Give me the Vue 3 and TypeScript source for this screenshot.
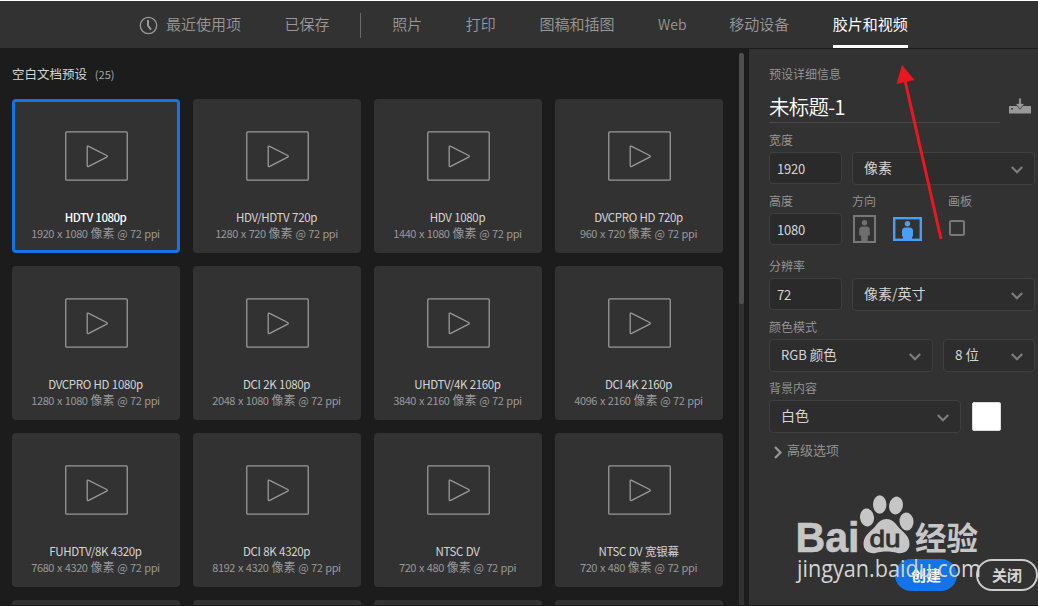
<script setup lang="ts">
import { ref } from 'vue'

interface Preset {
  name: string
  size: string
}

const categories: string[] = ['照片', '打印', '图稿和插图', 'Web', '移动设备', '胶片和视频']
const activeCategory = ref('胶片和视频')

const presets: Preset[] = [
  { name: 'HDTV 1080p', size: '1920 x 1080' },
  { name: 'HDV/HDTV 720p', size: '1280 x 720' },
  { name: 'HDV 1080p', size: '1440 x 1080' },
  { name: 'DVCPRO HD 720p', size: '960 x 720' },
  { name: 'DVCPRO HD 1080p', size: '1280 x 1080' },
  { name: 'DCI 2K 1080p', size: '2048 x 1080' },
  { name: 'UHDTV/4K 2160p', size: '3840 x 2160' },
  { name: 'DCI 4K 2160p', size: '4096 x 2160' },
  { name: 'FUHDTV/8K 4320p', size: '7680 x 4320' },
  { name: 'DCI 8K 4320p', size: '8192 x 4320' },
  { name: 'NTSC DV', size: '720 x 480' },
  { name: 'NTSC DV 宽银幕', size: '720 x 480' },
]
const selected = ref(0)
</script>

<template>
  <div class="dialog">
    <header class="tabs">
      <svg class="clock" width="19" height="19" viewBox="0 0 19 19">
        <circle cx="9.5" cy="9.5" r="8.2" />
        <path d="M9 4v5.7l3 4" />
      </svg>
      <span class="tab recent">最近使用项</span>
      <span class="tab">已保存</span>
      <i class="divider"></i>
      <span
        v-for="c in categories"
        :key="c"
        class="tab"
        :class="{ active: c === activeCategory, latin: c === 'Web' }"
        @click="activeCategory = c"
      >{{ c }}</span>
    </header>

    <div class="body">
      <section class="list">
        <div class="heading">空白文档预设 <small>(25)</small></div>
        <div class="grid">
          <div
            v-for="(p, i) in presets"
            :key="p.name"
            class="card"
            :class="{ selected: i === selected }"
            @click="selected = i"
          >
            <svg class="film" width="63" height="50" viewBox="0 0 63 50">
              <rect x="0.75" y="0.9" width="61.5" height="48.3" rx="1" />
              <path d="M22.2 16.200V34.400q0 1.600 1.500.9l18-9.200q1.300-.8 0-1.600l-18-9.200q-1.500-.7-1.500.9z" />
            </svg>
            <div class="name">{{ p.name }}</div>
            <div class="meta">{{ p.size }} <span>像素</span> @ 72 ppi</div>
          </div>
          <div v-for="n in 4" :key="'next' + n" class="card"></div>
        </div>
      </section>
      <div class="scroll"><i></i></div>

      <aside class="panel">
        <div class="caption">预设详细信息</div>
        <div class="title-row">
          <div class="title">未标题-1</div>
          <svg class="save" width="22" height="17" viewBox="0 0 22 17">
            <path d="M0 8h22v7.500H0z" fill="#999" />
            <path d="M9.700 0h2.600v5.500h3.500L11 11.200 6.200 5.500h3.500z" fill="#999" stroke="#323232" stroke-width=".8" />
            <rect x="2.200" y="10" width="1.600" height="1.600" fill="#323232" />
          </svg>
        </div>

        <div class="row first">
          <div class="field narrow">
            <label>宽度</label>
            <div class="input">1920</div>
          </div>
          <div class="field wide">
            <label></label>
            <div class="select">像素<svg class="chev" viewBox="0 0 12 8"><path d="M.8 1l5.200 5.200L11.200 1" /></svg></div>
          </div>
        </div>

        <div class="row">
          <div class="field narrow">
            <label>高度</label>
            <div class="input">1080</div>
          </div>
          <div class="field orient">
            <label>方向</label>
            <div class="orients">
              <svg width="23" height="28" viewBox="0 0 23 28" class="portrait">
                <rect x="1" y="1" width="21" height="26" />
                <circle cx="11.500" cy="7.800" r="2.700" />
                <path d="M6.200 15q0-3.500 3.500-3.500h3.600q3.500 0 3.500 3.500v5.500h-2V26H8.200v-5.500h-2z" />
              </svg>
              <svg width="29" height="24" viewBox="0 0 29 24" class="landscape">
                <rect x="1.200" y="1.200" width="26.600" height="21.600" />
                <circle cx="14.500" cy="6.800" r="2.700" />
                <path d="M9 14q0-3.500 3.500-3.500h4Q20 10.500 20 14v5.500h-1V22h-9v-2.500H9z" />
              </svg>
            </div>
          </div>
          <div class="field">
            <label>画板</label>
            <div class="check"></div>
          </div>
        </div>

        <div class="row spaced">
          <div class="field narrow">
            <label>分辨率</label>
            <div class="input">72</div>
          </div>
          <div class="field wide">
            <label></label>
            <div class="select">像素/英寸<svg class="chev" viewBox="0 0 12 8"><path d="M.8 1l5.200 5.200L11.200 1" /></svg></div>
          </div>
        </div>

        <div class="row">
          <div class="field mode">
            <label>颜色模式</label>
            <div class="select"><span class="latin">RGB</span>&nbsp;颜色<svg class="chev" viewBox="0 0 12 8"><path d="M.8 1l5.200 5.200L11.200 1" /></svg></div>
          </div>
          <div class="field depth">
            <label></label>
            <div class="select">8 位<svg class="chev" viewBox="0 0 12 8"><path d="M.8 1l5.200 5.200L11.200 1" /></svg></div>
          </div>
        </div>

        <div class="row">
          <div class="field background">
            <label>背景内容</label>
            <div class="select">白色<svg class="chev" viewBox="0 0 12 8"><path d="M.8 1l5.200 5.200L11.200 1" /></svg></div>
          </div>
          <div class="swatch"></div>
        </div>

        <div class="advanced">
          <svg width="8" height="13" viewBox="0 0 8 13"><path d="M1 1l5.500 5.500L1 12" /></svg>
          <span>高级选项</span>
        </div>

        <div class="actions">
          <button class="primary">创建</button>
          <button class="secondary">关闭</button>
        </div>
      </aside>
    </div>

    <svg class="overlay" width="1038" height="606" viewBox="0 0 1038 606">
      <path d="M904 76L941 239" stroke="#ec1620" stroke-width="3" fill="none" />
      <path d="M902 65L914.500 80 896.500 84z" fill="#ec1620" />
      <g class="mark">
        <text x="795.500" y="552" font-size="42" font-weight="700" textLength="64" lengthAdjust="spacingAndGlyphs" class="bai">Bai</text>
        <ellipse cx="867" cy="517.500" rx="7" ry="9" transform="rotate(-8 867 517.500)" />
        <ellipse cx="879.700" cy="504.500" rx="6.700" ry="9.300" />
        <ellipse cx="896" cy="505.500" rx="6.800" ry="9" transform="rotate(12 896 505.500)" />
        <ellipse cx="906.500" cy="521.500" rx="7" ry="9" transform="rotate(-5 906.500 521.500)" />
        <path d="M886.500 519c5 0 8 3 11 7 5 6 12 9 12 18 0 7-6 10-12 9-4-1-7-1.500-11-1.500s-7 .5-11 1.500c-6 1-12-2-12-9 0-9 7-12 12-18 3-4 6-7 11-7z" />
        <text x="869.500" y="547" font-size="24" textLength="31" lengthAdjust="spacingAndGlyphs" class="du">du</text>
        <text x="915" y="549.500" font-size="32" font-weight="700" textLength="63" lengthAdjust="spacingAndGlyphs" class="cjk">经验</text>
        <text x="797" y="577" font-size="23" textLength="184" lengthAdjust="spacingAndGlyphs" class="url">jingyan.baidu.com</text>
      </g>
    </svg>
  </div>
</template>

<style>
body {
  background: #1c1c1c;
  overflow: hidden;
}
</style>

<style scoped>
* {
  box-sizing: border-box;
}
.dialog {
  position: relative;
  width: 1038px;
  height: 606px;
  overflow: hidden;
  display: flex;
  flex-direction: column;
  background: #1c1c1c;
  border-top: 1px solid #fff;
  border-bottom: 1px solid #1c1418;
  font-family: "Noto Sans CJK SC", sans-serif;
  color: #d8d8d8;
}
.tabs {
  flex: none;
  height: 47px;
  background: #323232;
  display: flex;
  align-items: center;
  padding-left: 139px;
  gap: 43.600px;
}
.clock {
  margin-right: -35.600px;
  margin-top: 2px;
  fill: none;
  stroke: #999;
  stroke-width: 1.300;
}
.clock path {
  stroke-width: 2;
}
.tab {
  font-size: 15px;
  line-height: 45px;
  height: 47px;
  color: #999;
  font-weight: 350;
  white-space: nowrap;
}
.tab.latin {
  font-size: 14px;
  line-height: 47px;
  margin-right: -0.900px;
}
.tab.active {
  color: #fff;
  font-weight: 400;
  border-bottom: 3px solid #fff;
}
.divider {
  width: 1px;
  height: 25px;
  background: #6a6a6a;
  margin: 2px -12px 0 -13.600px;
}
.body {
  flex: 1;
  min-height: 0;
  display: flex;
}
.list {
  width: 739px;
  padding: 14px 0 0 12px;
  overflow: hidden;
}
.heading {
  height: 37px;
  line-height: 24px;
  font-size: 12.500px;
  color: #d5d5d5;
}
.heading small {
  font-size: 11px;
  margin-left: 5px;
  color: #aaa;
}
.grid {
  display: grid;
  grid-template-columns: repeat(4, 168px);
  grid-auto-rows: 154px;
  gap: 13px;
}
.card {
  background: #323232;
  border: 3px solid #323232;
  border-radius: 4px;
  display: flex;
  flex-direction: column;
  align-items: center;
  padding-top: 29px;
  white-space: nowrap;
}
.card.selected {
  border-color: #1473e6;
}
.film {
  flex: none;
  margin-left: 1px;
  fill: none;
  stroke: #999;
  stroke-width: 1.300;
}
.name {
  margin-top: 28px;
  margin-right: 1px;
  height: 16px;
  line-height: 16px;
  font-size: 11.500px;
  letter-spacing: -0.350px;
  word-spacing: 0.500px;
  color: #d5d5d5;
}
.selected .name {
  color: #fff;
  font-weight: 500;
  letter-spacing: -0.500px;
}
.meta {
  height: 16px;
  line-height: 16px;
  margin-right: 1px;
  font-size: 11px;
  letter-spacing: -0.420px;
  word-spacing: 0.800px;
  color: #999;
}
.meta span {
  font-size: 12px;
  letter-spacing: 0;
}
.scroll {
  width: 5px;
  margin-top: 5px;
  background: #323232;
  border-radius: 3px 3px 0 0;
}
.scroll i {
  display: block;
  height: 251px;
  border-radius: 2px;
  background: #4e4e4e;
}
.panel {
  width: 289px;
  margin: 1px 0 0 5px;
  padding: 16px 3px 0 20px;
  background: #323232;
  display: flex;
  flex-direction: column;
}
.caption {
  height: 20px;
  line-height: 18px;
  font-size: 12px;
  font-weight: 350;
  color: #999;
}
.title-row {
  display: flex;
  height: 38px;
}
.title {
  width: 231px;
  border-bottom: 1px solid #494949;
  font-size: 20.500px;
  line-height: 42px;
  font-weight: 350;
  letter-spacing: -0.800px;
  color: #fff;
}
.save {
  margin: 13px 0 0 9px;
}
.row {
  display: flex;
  height: 53px;
  margin-bottom: 8px;
}
.row.first {
  margin-top: 9px;
}
.row.spaced {
  margin-top: 4px;
}
.field label {
  display: block;
  height: 20px;
  line-height: 16px;
  font-size: 12px;
  font-weight: 350;
  color: #999;
}
.narrow {
  width: 73px;
  margin-right: 10px;
}
.wide {
  width: 183px;
}
.mode {
  width: 164px;
  margin-right: 10px;
}
.depth {
  width: 92px;
}
.background {
  width: 192px;
}
.orient {
  width: 96px;
}
.input,
.select {
  height: 33px;
  line-height: 29px;
  border: 1px solid #3f3f3f;
  border-radius: 4px;
  background: #2a2a2a;
  font-size: 14px;
  color: #d5d5d5;
}
.input {
  height: 32px;
  line-height: 31px;
  padding-left: 7px;
  font-size: 13px;
  letter-spacing: -0.200px;
}
.select {
  display: flex;
  background: #2d2d2d;
  padding: 0 11px;
}
.mode .latin {
  font-size: 13px;
}
.depth .select,
.mode .select {
  font-size: 13.500px;
}
.chev {
  width: 12px;
  height: 8px;
  margin: 13px 0 0 auto;
}
.chev path,
.advanced path {
  fill: none;
  stroke: #7d7d7d;
  stroke-width: 2.200;
}
.orients {
  display: flex;
  align-items: center;
  gap: 17px;
  padding: 2px 0 0 1px;
}
.portrait {
  fill: #6f6f6f;
  stroke: none;
}
.portrait rect {
  fill: none;
  stroke: #777;
  stroke-width: 2;
}
.landscape {
  fill: #4a9ff5;
}
.landscape rect {
  fill: none;
  stroke: #4a9ff5;
  stroke-width: 2.400;
}
.check {
  width: 16px;
  height: 16px;
  margin: 7px 0 0 1px;
  border: 2px solid #777;
  border-radius: 2px;
}
.swatch {
  width: 29px;
  height: 29px;
  margin: 22px 0 0 11px;
  border-radius: 2px;
  background: #fff;
  border: 1px solid #ddd;
}
.advanced {
  display: flex;
  align-items: center;
  gap: 5px;
  padding-left: 5px;
  font-size: 13px;
  font-weight: 350;
  line-height: 18px;
  color: #999;
}
.advanced svg {
  margin-top: 4px;
}
.advanced path {
  stroke: #999;
}
.actions {
  display: flex;
  justify-content: flex-end;
  gap: 19px;
  margin: auto -3px 14px 0;
}
button {
  width: 62px;
  height: 32px;
  padding: 0;
  border-radius: 16px;
  font: 700 15px/26px "Noto Sans CJK SC", sans-serif;
}
.primary {
  border: 0;
  background: #1473e6;
  color: #fff;
}
.secondary {
  border: 2px solid #ccc;
  background: transparent;
  color: #d5d5d5;
}
.overlay {
  position: absolute;
  left: 0;
  top: -1px;
  pointer-events: none;
}
.mark {
  fill: #c6c6c6;
}
.mark text {
  font-family: "Liberation Sans", sans-serif;
}
.mark .bai {
  stroke: #c6c6c6;
  stroke-width: 0.600;
}
.mark .du {
  fill: #323232;
  stroke: #323232;
  stroke-width: 0.900;
}
.mark .cjk {
  font-family: "Noto Sans CJK SC", sans-serif;
}
.mark .url {
  font-family: "Open Sans", "Noto Sans", sans-serif;
  fill: #d4d4d4;
}
</style>
